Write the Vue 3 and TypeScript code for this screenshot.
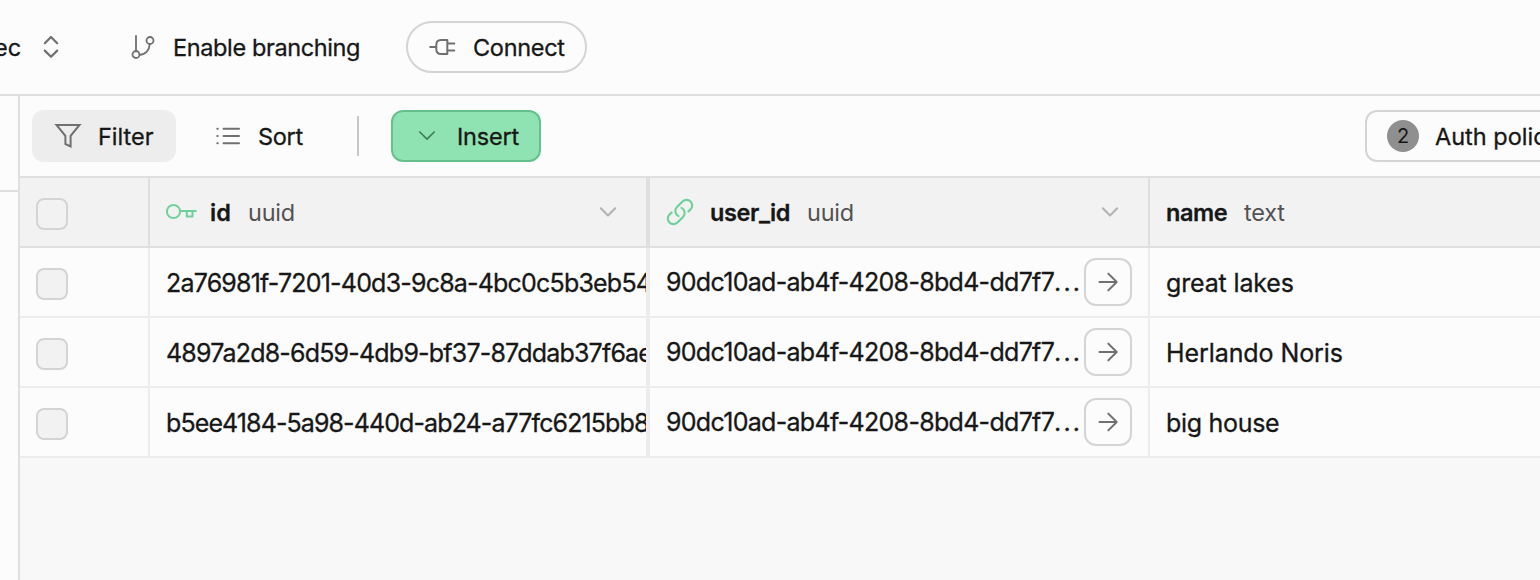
<script setup lang="ts">
interface Row {
  id: string
  userId: string
  name: string
  idClass: string
  nameClass: string
}

const rows: Row[] = [
  { id: '2a76981f-7201-40d3-9c8a-4bc0c5b3eb54', userId: '90dc10ad-ab4f-4208-8bd4-dd7f7', name: 'great lakes', idClass: 'id-a', nameClass: 'name-a' },
  { id: '4897a2d8-6d59-4db9-bf37-87ddab37f6ae', userId: '90dc10ad-ab4f-4208-8bd4-dd7f7', name: 'Herlando Noris', idClass: 'id-b', nameClass: 'name-b' },
  { id: 'b5ee4184-5a98-440d-ab24-a77fc6215bb8', userId: '90dc10ad-ab4f-4208-8bd4-dd7f7', name: 'big house', idClass: 'id-c', nameClass: 'name-c' },
]
</script>

<template>
  <div class="page">
    <header class="topbar">
      <span class="label project">ec</span>
      <svg class="updown" width="20" height="26" viewBox="0 0 20 26">
        <path d="M3.8 9.2 10 3l6.200 6.200M3.800 16.600 10 22.800l6.200-6.200" />
      </svg>
      <button class="branching">
        <svg width="28" height="28" viewBox="0 0 28 28">
          <path d="M6 3v15.400M19.700 11.200C19.500 17 15.500 21.600 9.600 21.900" />
          <circle cx="6" cy="21.500" r="3.500" />
          <circle cx="20" cy="7.500" r="3.500" />
        </svg>
        <span class="label t-branch">Enable branching</span>
      </button>
      <button class="connect">
        <svg width="28" height="20" viewBox="0 0 28 20">
          <path d="M2.200 10H8M19.300 3H13Q8.300 3 8.300 8V12Q8.300 17 13 17H19.300ZM19.300 6.500H26.300M19.300 13.500H26.300" />
        </svg>
        <span class="label t-connect">Connect</span>
      </button>
    </header>

    <div class="body">
      <aside class="side"><div class="side-head"></div></aside>
      <main class="main">
        <div class="toolbar">
          <button class="filter">
            <svg width="28" height="28" viewBox="0 0 28 28">
              <path d="M2.500 3H25.500L16.600 13.800V24.500L11.400 22V13.800Z" />
            </svg>
            <span class="label t-filter">Filter</span>
          </button>
          <button class="sort">
            <svg width="26" height="20" viewBox="0 0 26 20">
              <path d="M8.500 2.700H24M8.500 10H24M8.500 17.300H24M2.300 2.700h.4M2.300 10h.4M2.300 17.300h.4" />
            </svg>
            <span class="label t-sort">Sort</span>
          </button>
          <i class="sep"></i>
          <button class="insert">
            <svg width="18" height="12" viewBox="0 0 18 12"><path d="M1.800 2 9 9.200 16.200 2" /></svg>
            <span class="label t-insert">Insert</span>
          </button>
          <button class="auth">
            <span class="count">2</span>
            <span class="label t-auth">Auth policies</span>
          </button>
        </div>

        <div class="row head">
          <div class="cell check"><span class="box"></span></div>
          <div class="cell id">
            <svg class="key" width="32" height="20" viewBox="0 0 32 20">
              <circle cx="7.500" cy="9.500" r="6.600" />
              <path d="M14.400 9.100H29.800M20.800 9.100V14.500H26.500V9.100" />
            </svg>
            <b class="label t-id">id</b><span class="label type">uuid</span>
            <svg class="chev" width="18" height="12" viewBox="0 0 18 12"><path d="M1.800 2.300 9 9.500 16.200 2.300" /></svg>
          </div>
          <div class="cell user">
            <svg class="link" width="30" height="30" viewBox="0 0 24 24">
              <path d="M13.190 8.688a4.500 4.500 0 0 1 1.242 7.244l-4.500 4.500a4.500 4.500 0 0 1-6.364-6.364l1.757-1.757m13.350-.622 1.757-1.757a4.500 4.500 0 0 0-6.364-6.364l-4.500 4.500a4.500 4.500 0 0 0 1.242 7.244" />
            </svg>
            <b class="label t-user">user_id</b><span class="label type">uuid</span>
            <svg class="chev" width="18" height="12" viewBox="0 0 18 12"><path d="M1.800 2.300 9 9.500 16.200 2.300" /></svg>
          </div>
          <div class="cell name"><b class="label t-name">name</b><span class="label type t-text">text</span></div>
        </div>

        <div v-for="row in rows" :key="row.id" class="row">
          <div class="cell check"><span class="box"></span></div>
          <div class="cell id"><span class="value" :class="row.idClass">{{ row.id }}</span></div>
          <div class="cell user">
            <span class="value uid">{{ row.userId }}<span class="dots">...</span></span>
            <button class="go">
              <svg width="24" height="24" viewBox="0 0 24 24"><path d="M3.500 12H20.500M12.300 3.600 20.700 12 12.300 20.400" /></svg>
            </button>
          </div>
          <div class="cell name"><span class="value" :class="row.nameClass">{{ row.name }}</span></div>
        </div>
      </main>
    </div>
  </div>
</template>

<style>
body {
  margin: 0;
  overflow: hidden;
}
</style>

<style scoped>
* {
  box-sizing: border-box;
}
.page {
  width: 1540px;
  height: 580px;
  overflow: hidden;
  display: flex;
  flex-direction: column;
  background: #fcfcfc;
  color: #171717;
  font-family: Inter, 'Liberation Sans', sans-serif;
  font-weight: 400;
}
button {
  display: flex;
  flex: none;
  align-items: center;
  padding: 0;
  margin: 0;
  border: 0;
  background: none;
  color: inherit;
  font: inherit;
}
svg {
  display: block;
  flex: none;
  fill: none;
  stroke: #707070;
  stroke-width: 2;
  stroke-linecap: round;
  stroke-linejoin: round;
}
.label {
  font-size: 23.5px;
  line-height: 32px;
  white-space: nowrap;
  -webkit-text-stroke: 0.300px currentColor;
}
.topbar {
  height: 96px;
  flex: none;
  display: flex;
  align-items: center;
  border-bottom: 2px solid #dfdfdf;
}
.project {
  width: 41px;
  margin-left: -6px;
  padding-top: 2px;
}
.updown {
  margin-left: 6px;
  stroke-width: 2.200;
}
.branching {
  margin-left: 69px;
}
.branching svg {
  stroke-width: 1.800;
}
.t-branch {
  width: 188px;
  margin: 2px 0 0 15px;
  letter-spacing: -0.380px;
  text-align: left;
}
.connect {
  width: 181px;
  height: 52px;
  margin-left: 45px;
  padding-left: 20px;
  border: 2px solid #d4d4d4;
  border-radius: 26px;
}
.t-connect {
  margin: 2px 0 0 17px;
  letter-spacing: -0.300px;
}
.body {
  flex: 1;
  display: flex;
}
.side {
  width: 20px;
  flex: none;
  border-right: 2px solid #dfdfdf;
}
.side-head {
  height: 96px;
  border-bottom: 2px solid #dfdfdf;
}
.main {
  width: 1520px;
  flex: none;
  overflow: hidden;
  background: #f8f8f8;
}
.toolbar {
  height: 82px;
  display: flex;
  align-items: center;
  padding-left: 12px;
  background: #fcfcfc;
  border-bottom: 2px solid #dfdfdf;
}
.filter {
  width: 144px;
  height: 52px;
  padding-left: 22px;
  border-radius: 12px;
  background: #ededed;
}
.filter svg {
  stroke-linejoin: miter;
}
.t-filter {
  margin: 2px 0 0 16px;
}
.sort {
  width: 120px;
  margin-left: 39px;
}
.t-sort {
  margin: 2px 0 0 17px;
  letter-spacing: -0.300px;
}
.sep {
  flex: none;
  width: 2px;
  height: 40px;
  margin-left: 22px;
  background: #c7c7c7;
}
.insert {
  width: 150px;
  height: 52px;
  margin-left: 32px;
  padding-left: 25px;
  border: 2px solid #64c18b;
  border-radius: 12px;
  background: #8fe2b1;
}
.insert svg {
  stroke: #3f7d5a;
  stroke-width: 1.700;
}
.t-insert {
  margin: 2px 0 0 21px;
  letter-spacing: -0.200px;
}
.auth {
  width: 230px;
  height: 52px;
  margin-left: 824px;
  padding-left: 20px;
  border: 2px solid #d4d4d4;
  border-radius: 12px;
}
.count {
  flex: none;
  width: 32px;
  height: 32px;
  border-radius: 50%;
  background: #8f8f8f;
  font-size: 20px;
  line-height: 33px;
  text-align: center;
}
.t-auth {
  margin: 2px 0 0 16px;
}
.row {
  height: 70px;
  display: flex;
  background: #fcfcfc;
  --line: #ededed;
}
.head {
  background: #f2f2f2;
  --line: #dfdfdf;
}
.cell {
  flex: none;
  display: flex;
  align-items: center;
  overflow: hidden;
  border-right: 2px solid var(--line);
  border-bottom: 2px solid var(--line);
}
.check {
  width: 130px;
  padding: 4px 0 0 16px;
}
.box {
  width: 32px;
  height: 32px;
  border: 2px solid #d4d4d4;
  border-radius: 8px;
  background: #f2f2f2;
}
.id {
  width: 500px;
  padding-left: 16px;
  border-right-width: 4px;
}
.user {
  width: 500px;
  padding: 0 16px;
}
.name {
  width: 500px;
  padding-left: 16px;
}
.key,
.link {
  stroke: #6fd09a;
}
.link {
  stroke-width: 1.700;
  margin-left: -1px;
}
.t-id {
  margin: 2px 0 0 12px;
  width: 38px;
}
.t-user {
  margin: 2px 0 0 15px;
  width: 97px;
  letter-spacing: -0.400px;
}
.t-name {
  margin-top: 2px;
  width: 78px;
  letter-spacing: -0.400px;
}
b.label {
  font-weight: 600;
}
.type {
  margin-top: 2px;
  color: #525252;
  letter-spacing: -0.250px;
  -webkit-text-stroke: 0;
}
.chev {
  margin-left: auto;
  stroke: #b2b2b2;
}
.id .chev {
  margin-right: 29px;
}
.user .chev {
  margin-right: 13px;
}
.value {
  font-size: 25px;
  line-height: 34px;
  padding-top: 2px;
  white-space: nowrap;
  letter-spacing: -0.150px;
  -webkit-text-stroke: 0.300px currentColor;
}
.name-b {
  letter-spacing: -0.080px;
}
.name-c {
  letter-spacing: -0.300px;
}
.id-a,
.id-b {
  letter-spacing: -0.800px;
}
.id-c {
  letter-spacing: -0.900px;
}
.uid {
  width: 418px;
  padding-top: 0;
  flex: none;
  letter-spacing: -0.700px;
}
.dots {
  letter-spacing: 2.100px;
}
.go {
  width: 48px;
  height: 48px;
  justify-content: center;
  border: 2px solid #d4d4d4;
  border-radius: 12px;
}
</style>
